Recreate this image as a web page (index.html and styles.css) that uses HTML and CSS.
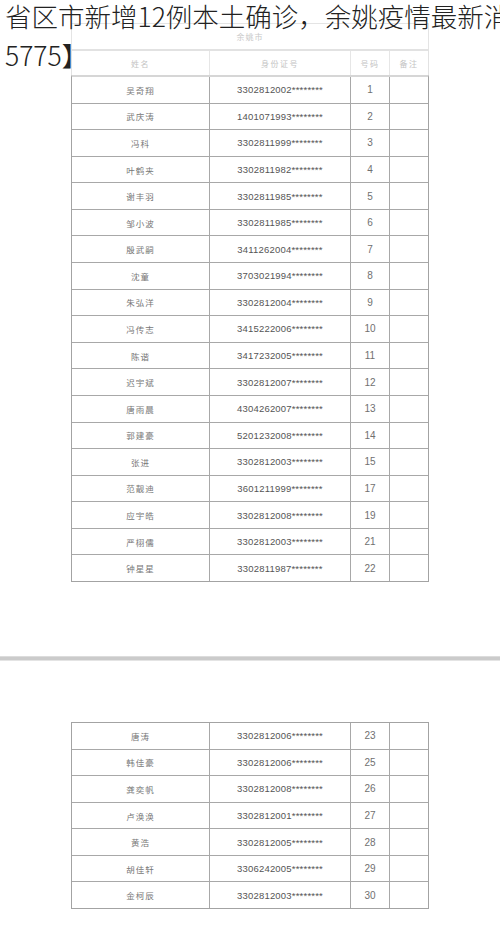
FILE: index.html
```html
<!DOCTYPE html>
<html lang="zh-CN">
<head>
<meta charset="utf-8">
<title>余姚市</title>
<link rel="stylesheet" href="styles.css">
</head>
<body>
<div class="title"><span class="tl">省区市新增12例本土确诊，余姚疫情最新消息</span><br><span class="tl">5775】</span></div>

<div class="sheet sheet-first">
  <div class="cap">余姚市</div>
  <div class="grid hdr">
    <div class="c">姓名</div><div class="c">身份证号</div><div class="c">号码</div><div class="c">备注</div>
  </div>
  <div class="data">
    <div class="grid row"><div class="c nm">吴奇翔</div><div class="c id">3302812002********</div><div class="c no">1</div><div class="c"></div></div>
    <div class="grid row"><div class="c nm">武庆涛</div><div class="c id">1401071993********</div><div class="c no">2</div><div class="c"></div></div>
    <div class="grid row"><div class="c nm">冯科</div><div class="c id">3302811999********</div><div class="c no">3</div><div class="c"></div></div>
    <div class="grid row"><div class="c nm">叶鹤夹</div><div class="c id">3302811982********</div><div class="c no">4</div><div class="c"></div></div>
    <div class="grid row"><div class="c nm">谢丰羽</div><div class="c id">3302811985********</div><div class="c no">5</div><div class="c"></div></div>
    <div class="grid row"><div class="c nm">邹小波</div><div class="c id">3302811985********</div><div class="c no">6</div><div class="c"></div></div>
    <div class="grid row"><div class="c nm">殷武嗣</div><div class="c id">3411262004********</div><div class="c no">7</div><div class="c"></div></div>
    <div class="grid row"><div class="c nm">沈童</div><div class="c id">3703021994********</div><div class="c no">8</div><div class="c"></div></div>
    <div class="grid row"><div class="c nm">朱弘洋</div><div class="c id">3302812004********</div><div class="c no">9</div><div class="c"></div></div>
    <div class="grid row"><div class="c nm">冯传志</div><div class="c id">3415222006********</div><div class="c no">10</div><div class="c"></div></div>
    <div class="grid row"><div class="c nm">陈谐</div><div class="c id">3417232005********</div><div class="c no">11</div><div class="c"></div></div>
    <div class="grid row"><div class="c nm">迟宇斌</div><div class="c id">3302812007********</div><div class="c no">12</div><div class="c"></div></div>
    <div class="grid row"><div class="c nm">唐雨晨</div><div class="c id">4304262007********</div><div class="c no">13</div><div class="c"></div></div>
    <div class="grid row"><div class="c nm">郭建豪</div><div class="c id">5201232008********</div><div class="c no">14</div><div class="c"></div></div>
    <div class="grid row"><div class="c nm">张进</div><div class="c id">3302812003********</div><div class="c no">15</div><div class="c"></div></div>
    <div class="grid row"><div class="c nm">范靓迪</div><div class="c id">3601211999********</div><div class="c no">17</div><div class="c"></div></div>
    <div class="grid row"><div class="c nm">应宇皓</div><div class="c id">3302812008********</div><div class="c no">19</div><div class="c"></div></div>
    <div class="grid row"><div class="c nm">严栩儒</div><div class="c id">3302812003********</div><div class="c no">21</div><div class="c"></div></div>
    <div class="grid row"><div class="c nm">钟星星</div><div class="c id">3302811987********</div><div class="c no">22</div><div class="c"></div></div>
  </div>
</div>

<div class="divider"></div>

<div class="sheet sheet-second">
  <div class="data data-top">
    <div class="grid row"><div class="c nm">唐涛</div><div class="c id">3302812006********</div><div class="c no">23</div><div class="c"></div></div>
    <div class="grid row"><div class="c nm">韩佳豪</div><div class="c id">3302812006********</div><div class="c no">25</div><div class="c"></div></div>
    <div class="grid row"><div class="c nm">龚奕帆</div><div class="c id">3302812008********</div><div class="c no">26</div><div class="c"></div></div>
    <div class="grid row"><div class="c nm">卢涣涣</div><div class="c id">3302812001********</div><div class="c no">27</div><div class="c"></div></div>
    <div class="grid row"><div class="c nm">黄浩</div><div class="c id">3302812005********</div><div class="c no">28</div><div class="c"></div></div>
    <div class="grid row"><div class="c nm">胡佳轩</div><div class="c id">3306242005********</div><div class="c no">29</div><div class="c"></div></div>
    <div class="grid row"><div class="c nm">金柯辰</div><div class="c id">3302812003********</div><div class="c no">30</div><div class="c"></div></div>
  </div>
</div>
</body>
</html>
```

FILE: styles.css
```css
html, body {
  margin: 0;
  padding: 0;
  background: #ffffff;
}

body {
  width: 500px;
  overflow: hidden;
  font-family: "Noto Sans CJK SC", "Noto Sans", sans-serif;
}

.title {
  position: relative;
  z-index: 2;
  margin-top: -4px;
  height: 78px;
  padding-left: 5px;
  font-size: 26.5px;
  font-weight: 300;
  line-height: 39px;
  color: #222222;
  white-space: nowrap;
  overflow: hidden;
}

.sheet {
  width: 358px;
  margin-left: 71px;
  box-sizing: border-box;
}

.sheet-first {
  margin-top: -51px;
}

.cap {
  box-sizing: border-box;
  height: 26px;
  border: 1px solid #e4e4e4;
  border-bottom: none;
  text-align: center;
  font-size: 8px;
  line-height: 25px;
  letter-spacing: 1px;
  color: #c8c8c8;
}

.grid {
  display: grid;
  grid-template-columns: 138px 141px 39px 1fr;
}

.hdr {
  box-sizing: border-box;
  height: 26px;
  border: 1px solid #e2e2e2;
  border-top-width: 2px;
  border-bottom: none;
  font-size: 8px;
  letter-spacing: 1.5px;
  color: #c4c4c4;
}

.hdr .c {
  border-right: 1px solid #e6e6e6;
}

.hdr .c:last-child {
  border-right: none;
}

.c {
  display: flex;
  align-items: center;
  justify-content: center;
}

.data {
  border: 1px solid #a3a3a3;
  border-top: 2px solid #d6d6d6;
}

.data-top {
  border-top: 1px solid #a3a3a3;
}

.row {
  box-sizing: border-box;
  height: 26.58px;
  border-bottom: 1px solid #a8a8a8;
}

.row:last-child {
  height: 25.58px;
  border-bottom: none;
}

.row .c {
  border-right: 1px solid #a8a8a8;
}

.row .c:last-child {
  border-right: none;
}

.nm {
  font-size: 8.5px;
  letter-spacing: 1px;
  color: #777777;
}

.id {
  font-family: "Liberation Sans", "DejaVu Sans", sans-serif;
  font-size: 9.5px;
  letter-spacing: 0.2px;
  color: #555555;
}

.no {
  font-family: "Liberation Sans", "DejaVu Sans", sans-serif;
  font-size: 10px;
  color: #707070;
}

.divider {
  margin-top: 74px;
  height: 5px;
  background: #cbcbcb;
  border-top: 1px solid #dcdcdc;
  border-bottom: 1px solid #e4e4e4;
  box-sizing: border-box;
}

.sheet-second {
  margin-top: 61px;
}
```
